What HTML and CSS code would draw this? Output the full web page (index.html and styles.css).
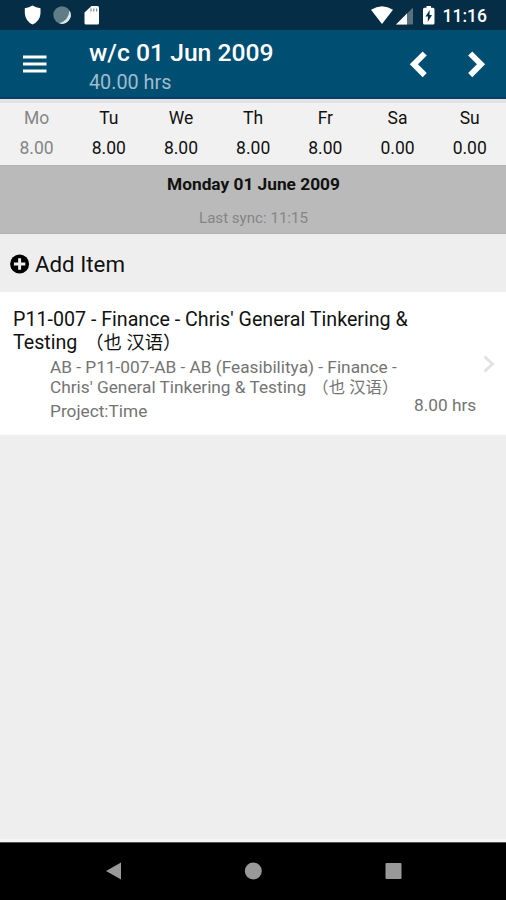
FILE: index.html
```html
<!DOCTYPE html>
<html lang="en">
<head>
<meta charset="utf-8">
<title>Timesheet</title>
<link rel="stylesheet" href="styles.css">
</head>
<body>
<div class="status">
  <svg class="status-left" width="80" height="30" viewBox="0 0 80 30">
    <path d="M8.500 5.500Q12 7.600 16.500 8.200V13.500Q16 21 8.500 24.600Q1.500 21 .8 13.500V8.200Q5 7.600 8.500 5.500Z" fill="#fff"/>
    <circle cx="38" cy="15" r="8.700" fill="#607c87"/>
    <path d="M45.500 10.500A8.700 8.700 0 0 1 35 23.200Q44.500 21 45.500 10.500Z" fill="#dce6ea"/>
    <path d="M67.500 6H73.500Q75 6 75 7.500V23Q75 24.500 73.500 24.500H62Q60.500 24.500 60.500 23V12.500Z" fill="#fff"/>
    <path d="M67 8.500V11.500M69.800 8.500V11.500M72.600 8.500V11.500" stroke="#7b8994" stroke-width="1.200"/>
  </svg>
  <div class="status-right">
    <svg width="66" height="30" viewBox="0 0 66 30">
      <path d="M0 9.800Q11 2.500 22 9.800L11 24Z" fill="#fff"/>
      <path d="M42 7.500V24.500H25Z" fill="#59717f"/>
      <path d="M36 13.500V24.500H25Z" fill="#fff"/>
      <path d="M55.500 6H60V7.800H62Q63.500 7.800 63.500 9.300V23Q63.500 24.500 62 24.500H53.500Q52 24.500 52 23V9.300Q52 7.800 53.500 7.800H55.500Z" fill="#fff"/>
      <path d="M58.700 10L54.500 16.500H57L56.700 22L61 15H58.500Z" fill="#062d45"/>
    </svg>
    <span class="clock">11:16</span>
  </div>
</div>
<header class="appbar">
  <svg class="menu" width="24" height="18" viewBox="0 0 24 18"><path d="M0 2H23.500M0 9H23.500M0 16H23.500" stroke="#fff" stroke-width="2.800"/></svg>
  <div class="heading">
    <div class="title">w/c 01 Jun 2009</div>
    <div class="total">40.00 hrs</div>
  </div>
  <svg class="arrows" width="78" height="30" viewBox="0 0 78 30"><path d="M15.700 4.500L4.900 15.300L15.700 26.100M61.200 4.500L72 15.300L61.200 26.100" fill="none" stroke="#fff" stroke-width="5.800"/></svg>
</header>
<div class="week">
  <div class="day current"><span>Mo</span><span>8.00</span></div>
  <div class="day"><span>Tu</span><span>8.00</span></div>
  <div class="day"><span>We</span><span>8.00</span></div>
  <div class="day"><span>Th</span><span>8.00</span></div>
  <div class="day"><span>Fr</span><span>8.00</span></div>
  <div class="day"><span>Sa</span><span>0.00</span></div>
  <div class="day"><span>Su</span><span>0.00</span></div>
</div>
<div class="datebar">
  <div class="date">Monday 01 June 2009</div>
  <div class="sync">Last sync: 11:15</div>
</div>
<div class="add">
  <svg width="20" height="20" viewBox="0 0 20 20"><circle cx="9.600" cy="10" r="9.500" fill="#000"/><path d="M9.600 4.300V15.700M3.900 10H15.300" stroke="#eee" stroke-width="3"/></svg>
  <span>Add Item</span>
</div>
<div class="item">
  <div class="item-text">
    <div class="item-title">P11-007 - Finance - Chris' General Tinkering &amp;<br>Testing <span class="cjk">（也 汉语）</span></div>
    <div class="item-detail">AB - P11-007-AB - AB (Feasibilitya) - Finance -<br>Chris' General Tinkering &amp; Testing <span class="cjk">（也 汉语）</span></div>
    <div class="item-type">Project:Time</div>
  </div>
  <div class="item-side">
    <svg width="12" height="18" viewBox="0 0 12 18"><path d="M1.500 1.500L9.500 9L1.500 16.500" fill="none" stroke="#e2e2e2" stroke-width="3"/></svg>
    <span class="hours">8.00 hrs</span>
  </div>
</div>
<div class="rest"></div>
<div class="nav">
  <svg width="506" height="58" viewBox="0 0 506 58"><path d="M106 29L121 20.500V37.500Z" fill="#999"/><circle cx="253.300" cy="29" r="8.500" fill="#999"/><rect x="385.500" y="21" width="16" height="16" rx="1" fill="#999"/></svg>
</div>
</body>
</html>
```
FILE: styles.css
```css
* { box-sizing: border-box; }
body {
  margin: 0;
  width: 506px;
  height: 900px;
  display: flex;
  flex-direction: column;
  overflow: hidden;
  background: #eee;
  color: #111;
  font-family: Roboto, "Noto Sans CJK SC", sans-serif;
  white-space: nowrap;
}
.status {
  height: 30px;
  background: #052d45;
  display: flex;
  justify-content: space-between;
  padding: 0 19px 0 24px;
}
.status-right { display: flex; align-items: center; gap: 6px; }
.clock { color: #fff; font-size: 17.500px; font-weight: 500; line-height: 30px; padding-top: 2px; }
.appbar {
  height: 69px;
  background: #004f73;
  border-bottom: 2px solid #004068;
  display: flex;
  padding-left: 23px;
  color: #fff;
}
.menu { margin-top: 25px; }
.heading { margin-left: 42px; padding-top: 8px; }
.title { font-size: 24.700px; font-weight: 500; line-height: 30px; }
.total { font-size: 19.800px; line-height: 29px; color: #a0bccc; }
.arrows { margin: 19px 19px 0 auto; }
.week {
  height: 66px;
  background: #f1f1f1;
  border-top: 4px solid #e2e0e3;
  display: grid;
  grid-template-columns: repeat(7, 72.2px);
}
.day { display: flex; flex-direction: column; text-align: center; font-size: 17.500px; line-height: 30px; padding-left: 1px; }
.current { color: #858585; }
.datebar { height: 69px; background: #bababa; border: solid #b2b2b2; border-width: 1px 0; text-align: center; padding-left: 1px; }
.date { font-size: 17.300px; font-weight: 700; line-height: 36px; }
.sync { font-size: 15.100px; line-height: 33px; color: #858585; }
.add {
  height: 58px;
  display: flex;
  align-items: center;
  gap: 5px;
  padding: 2px 0 0 10px;
  font-size: 22.300px;
}
.item { height: 143px; background: #fff; display: flex; justify-content: space-between; padding: 16px 11px 0 13px; }
.item-title { font-size: 19.650px; line-height: 23px; height: 49px; }
.item-title .cjk { font-size: 18.300px; margin-left: 3px; }
.item-detail { margin-left: 37px; font-size: 17.250px; line-height: 20px; height: 43px; color: #747474; }
.item-detail .cjk { font-size: 16.400px; margin-left: 2px; }
.item-type { margin-left: 37px; font-size: 17.250px; line-height: 22px; color: #747474; }
.item-side { width: 81px; display: flex; flex-direction: column; padding-top: 47px; }
.item-side svg { align-self: flex-end; }
.hours { font-size: 17.300px; line-height: 22px; margin-top: 21px; color: #747474; }
.rest { flex: 1; border-bottom: 3px solid #f5f5f5; }
.nav { height: 58px; background: #000; border-top: 1px solid #555; }
.nav svg { display: block; margin-top: -1px; }
```
